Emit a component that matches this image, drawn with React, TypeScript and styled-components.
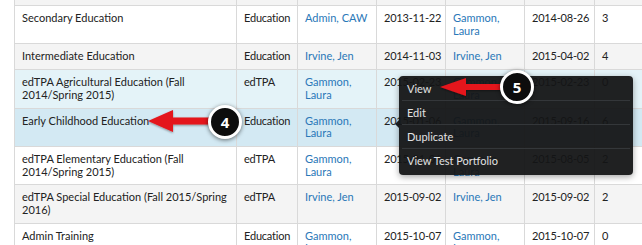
import React from "react";
import styled, { createGlobalStyle } from "styled-components";

const GlobalStyle = createGlobalStyle`
  html, body {
    margin: 0;
    padding: 0;
    background: #fff;
  }
`;

type Tone = "white" | "grey" | "light" | "hover";

const toneColors: Record<Tone, string> = {
  white: "#ffffff",
  grey: "#f4f4f4",
  light: "#e4f3f8",
  hover: "#d3e9f3",
};

const Page = styled.div`
  position: relative;
  width: 642px;
  height: 245px;
  overflow: hidden;
  font-family: Lato, "Open Sans", sans-serif;
  font-size: 11px;
  color: #222;
`;

const Table = styled.table`
  margin-left: 14px;
  border-collapse: collapse;
  table-layout: fixed;
  width: 700px;
`;

const Row = styled.tr<{ $tone: Tone }>`
  background: ${(p) => toneColors[p.$tone]};
`;

const Cell = styled.td<{ $nowrap?: boolean }>`
  border: 1px solid #d9d9d9;
  padding: 6px 7px 6px 7px;
  line-height: 12.7px;
  vertical-align: top;
  white-space: ${(p) => (p.$nowrap ? "nowrap" : "pre-line")};
  letter-spacing: ${(p) => (p.$nowrap ? "-0.2px" : "0")};
`;

const StubCell = styled.td`
  border: 1px solid #d9d9d9;
  border-top: none;
  height: 5px;
  padding: 0;
`;

const Link = styled.span`
  color: #2a78b8;
`;

const Menu = styled.div`
  position: absolute;
  left: 399px;
  top: 76px;
  width: 234px;
  padding: 1px 3px 3px;
  box-sizing: border-box;
  background: rgba(20, 21, 22, 0.95);
  border-radius: 4px;
  box-shadow: 0 2px 6px rgba(0, 0, 0, 0.35);

  &::before {
    content: "";
    position: absolute;
    left: -4px;
    top: 44px;
    border-top: 4px solid transparent;
    border-bottom: 4px solid transparent;
    border-right: 4px solid rgba(20, 21, 22, 0.95);
  }
`;

const MenuItem = styled.div<{ $last?: boolean }>`
  padding: 5px 5px 5px 5px;
  line-height: 13px;
  color: #e2e2e2;
  border-bottom: ${(p) => (p.$last ? "none" : "1px solid #34373a")};
`;

const Badge = styled.div<{ $x: number; $y: number }>`
  position: absolute;
  left: ${(p) => p.$x - 17}px;
  top: ${(p) => p.$y - 17}px;
  width: 28px;
  height: 28px;
  border: 3px solid #fff;
  border-radius: 50%;
  background: #0d0d0d;
  color: #fff;
  font-family: "Open Sans", Arial, sans-serif;
  font-weight: 700;
  font-size: 15px;
  display: flex;
  align-items: center;
  justify-content: center;
  box-shadow: 0 1px 4px rgba(0, 0, 0, 0.55);
`;

const Overlay = styled.svg`
  position: absolute;
  left: 0;
  top: 0;
  pointer-events: none;
`;

type Entry = {
  name: string;
  type: string;
  creator: string;
  created: string;
  owner: string;
  updated: string;
  count: string;
  tone: Tone;
};

const rows: Entry[] = [
  { name: "Secondary Education", type: "Education", creator: "Admin, CAW", created: "2013-11-22", owner: "Gammon,\nLaura", updated: "2014-08-26", count: "3", tone: "white" },
  { name: "Intermediate Education", type: "Education", creator: "Irvine, Jen", created: "2014-11-03", owner: "Irvine, Jen", updated: "2015-04-02", count: "4", tone: "grey" },
  { name: "edTPA Agricultural Education (Fall\n2014/Spring 2015)", type: "edTPA", creator: "Gammon,\nLaura", created: "2015-02-23", owner: "Gammon,\nLaura", updated: "2015-02-23", count: "0", tone: "light" },
  { name: "Early Childhood Education", type: "Education", creator: "Gammon,\nLaura", created: "2015-01-06", owner: "Gammon,\nLaura", updated: "2015-09-16", count: "6", tone: "hover" },
  { name: "edTPA Elementary Education (Fall\n2014/Spring 2015)", type: "edTPA", creator: "Gammon,\nLaura", created: "2015-01-06", owner: "Gammon,\nLaura", updated: "2015-08-05", count: "2", tone: "white" },
  { name: "edTPA Special Education (Fall 2015/Spring\n2016)", type: "edTPA", creator: "Irvine, Jen", created: "2015-09-02", owner: "Irvine, Jen", updated: "2015-09-02", count: "2", tone: "grey" },
  { name: "Admin Training", type: "Education", creator: "Gammon,\nLaura", created: "2015-10-07", owner: "Gammon,\nLaura", updated: "2015-10-07", count: "0", tone: "white" },
];

const widths = [222, 61, 79, 69, 79, 70, 120];

const App: React.FC = () => {
  return (
    <Page>
      <GlobalStyle />
      <Table>
        <colgroup>
          {widths.map((w, i) => (
            <col key={i} style={{ width: w }} />
          ))}
        </colgroup>
        <tbody>
          <Row $tone="grey">
            {widths.map((_, i) => (
              <StubCell key={i} />
            ))}
          </Row>
          {rows.map((r, i) => (
            <Row key={i} $tone={r.tone}>
              <Cell>{r.name}</Cell>
              <Cell $nowrap>{r.type}</Cell>
              <Cell><Link>{r.creator}</Link></Cell>
              <Cell $nowrap>{r.created}</Cell>
              <Cell><Link>{r.owner}</Link></Cell>
              <Cell $nowrap>{r.updated}</Cell>
              <Cell>{r.count}</Cell>
            </Row>
          ))}
        </tbody>
      </Table>

      <Menu>
        <MenuItem>View</MenuItem>
        <MenuItem>Edit</MenuItem>
        <MenuItem>Duplicate</MenuItem>
        <MenuItem $last>View Test Portfolio</MenuItem>
      </Menu>

      <Overlay width={642} height={245}>
        <defs>
          <filter id="sh" x="-20%" y="-50%" width="140%" height="200%">
            <feDropShadow dx="0" dy="1" stdDeviation="1.2" floodColor="#000" floodOpacity="0.4" />
          </filter>
        </defs>
        <path d="M148 121 L173 110 L173 117.5 L212 117.5 L212 124.5 L173 124.5 L173 132 Z" fill="#e4141c" filter="url(#sh)" />
        <path d="M440 87 L466 78 L466 84 L505 84 L505 90 L466 90 L466 96 Z" fill="#e4141c" filter="url(#sh)" />
      </Overlay>

      <Badge $x={225} $y={122}>4</Badge>
      <Badge $x={517} $y={87}>5</Badge>
    </Page>
  );
};

export default App;
